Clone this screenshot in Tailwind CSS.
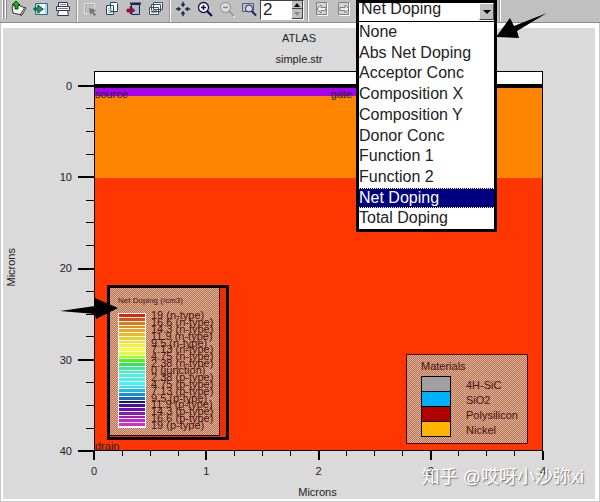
<!DOCTYPE html>
<html lang="en">

<head>
    <meta charset="UTF-8">
    <meta name="viewport" content="width=device-width, initial-scale=1.0">
    <title>ATLAS - simple.str</title>
    <script src="https://cdn.jsdelivr.net/npm/@tailwindcss/browser@4"></script>
</head>

<body class="flex h-screen min-h-[420px] flex-col overflow-hidden bg-white font-['Liberation_Sans',Arial,sans-serif] text-[11px] text-[#222]">
    <!-- Toolbar -->
    <header class="relative z-10 flex h-[23px] shrink-0 items-start border-b border-[#8c8c8c] bg-[#c0c0c0]">
        <div class="flex h-[19px] w-2 gap-px pl-0.5">
            <span class="w-0.5 border-r border-[#888] bg-white"></span>
            <span class="w-0.5 border-r border-[#888] bg-white"></span>
        </div>
        <button aria-label="Open" class="flex h-[19px] w-[22px] justify-center">
            <svg class="h-[18px] w-4" viewBox="0 0 16 18">
                <path d="M1 7l4-3 9 4-3 7-9-2z" fill="#fff" stroke="#333" />
                <path d="M14 7l1 1-4 7-2 0z" fill="#e8d890" stroke="#444" />
                <path d="M5 1l4 4H7v4H4V5H1z" fill="#18b818" stroke="#064806" />
            </svg>
        </button>
        <button aria-label="Save" class="flex h-[19px] w-[22px] justify-center">
            <svg class="h-[18px] w-4" viewBox="0 0 16 18">
                <path d="M2.500 3.500h12v11h-12z" fill="#a8d8ec" stroke="#36688c" />
                <path d="M6 4h6v4H6zM7 10h5v4H7z" fill="#fff" />
                <path d="M1 8h4V5l5 4-5 4v-3H1z" fill="#20a060" stroke="#0a5030" />
            </svg>
        </button>
        <button aria-label="Print" class="flex h-[19px] w-[22px] justify-center">
            <svg class="h-[18px] w-4" viewBox="0 0 16 18" fill="#fff" stroke="#33335c">
                <path d="M3.500 7V2.500h9V7M1.500 6.500h13v4h-13zM3.500 10.500h9l1 5h-11z" />
                <path d="M5 4.500h6M3 8.500h10" stroke="#777799" />
            </svg>
        </button>
        <div class="flex h-[22px] w-[5px] justify-center"><span class="w-0.5 border-r border-white bg-[#999]"></span></div>
        <button aria-label="Select" class="flex h-[19px] w-[22px] justify-center">
            <svg class="h-[18px] w-4" viewBox="0 0 16 18" fill="none">
                <path d="M2.500 3.500h10v10h-10z" stroke="#f4f4f4" stroke-dasharray="2 1" />
                <path d="M3.500 4.500h8v8h-8z" stroke="#8a8a8a" stroke-dasharray="1 2" />
                <path d="M7 8l7 2-2 2 2 3-2 1-2-3-2 2z" fill="#777" />
            </svg>
        </button>
        <button aria-label="Copy" class="flex h-[19px] w-[22px] justify-center">
            <svg class="h-[18px] w-4" viewBox="0 0 16 18" fill="#fff" stroke="#2c4464">
                <path d="M6.500 2.500h6l1 1v8h-7zM2.500 5.500h7v9h-7z" />
                <path d="M4 8.500h4M4 10.500h4M4 12.500h4" stroke="#8abcd4" />
            </svg>
        </button>
        <button aria-label="Insert" class="flex h-[19px] w-[22px] justify-center">
            <svg class="h-[18px] w-4" viewBox="0 0 16 18">
                <path d="M5.500 4.500h8v10h-8z" fill="#a8bccc" stroke="#202050" />
                <path d="M4 3.500h11" stroke="#202050" stroke-width="2" />
                <path d="M1 9h3V6l5 4.500L4 14v-2H1z" fill="#98103c" stroke="#500020" stroke-width=".5" />
            </svg>
        </button>
        <button aria-label="Windows" class="flex h-[19px] w-[22px] justify-center">
            <svg class="h-[18px] w-4" viewBox="0 0 16 18" fill="#fff" stroke="#38506c">
                <path d="M5.500 2.500h9v7h-9zM3.500 4.500h9v7h-9zM1.500 7.500h9v7h-9z" />
                <path d="M3 10.500h6M3 12.500h6" stroke="#9ab" />
            </svg>
        </button>
        <div class="flex h-[22px] w-[5px] justify-center"><span class="w-0.5 border-r border-white bg-[#999]"></span></div>
        <button aria-label="Fit to window" class="flex h-[19px] w-[22px] justify-center">
            <svg class="h-[18px] w-4" viewBox="0 0 16 18" fill="#20204c">
                <path d="M7.500 2h1v2H10L8 7 6 4h1.500zM7.500 16h1v-2H10l-2-3-2 3h1.500zM1 8.500v1h2V11l3-2-3-2v1.500zM15 8.500v1h-2V11l-3-2 3-2v1.500z" stroke="#20204c" stroke-width=".4" />
            </svg>
        </button>
        <button aria-label="Zoom in" class="flex h-[19px] w-[22px] justify-center">
            <svg class="h-[18px] w-4" viewBox="0 0 16 18" fill="none" stroke="#101050">
                <circle cx="6.500" cy="7.500" r="5" fill="#fff" stroke-width="1.300" />
                <path d="M4 7.500h5M6.500 5v5" stroke-width="1.500" />
                <path d="M10 11l5 5" stroke-width="2.200" />
            </svg>
        </button>
        <button aria-label="Zoom out" disabled class="flex h-[19px] w-[22px] justify-center">
            <svg class="h-[18px] w-4" viewBox="0 0 16 18" fill="none" stroke="#888">
                <path d="M11 12l5 5" stroke="#fff" stroke-width="1.500" />
                <circle cx="6.500" cy="7.500" r="5" fill="#ddd" />
                <path d="M4 7.500h5M10 11l5 5" stroke-width="1.500" />
            </svg>
        </button>
        <button aria-label="Zoom area" class="flex h-[19px] w-[22px] justify-center">
            <svg class="h-[18px] w-4" viewBox="0 0 16 18" fill="none" stroke="#24245c">
                <path d="M1.500 3.500h11v8h-11z" stroke="#55558a" />
                <circle cx="8" cy="8.500" r="3.500" fill="#d4dce8" />
                <path d="M11 11.500l4 4" stroke-width="2" />
            </svg>
        </button>
        <div class="flex h-5 w-11 border border-[#444] border-r-white border-b-white bg-white">
            <input type="text" aria-label="Zoom factor" value="2" class="min-w-0 flex-1 pl-0.5 text-[17px] leading-4 text-[#222] outline-none">
            <div class="flex w-[11px] flex-col bg-[#c0c0c0]">
                <button aria-label="Increase" class="flex h-2 items-center justify-center border-r border-b border-[#444]">
                    <svg class="h-1 w-1.5" viewBox="0 0 6 4"><path d="M3 0l3 4H0z" /></svg>
                </button>
                <button aria-label="Decrease" class="flex flex-1 items-center justify-center border-r border-b border-[#444]">
                    <svg class="h-1 w-1.5" viewBox="0 0 6 4"><path d="M0 0h6L3 4z" fill="#888" /></svg>
                </button>
            </div>
        </div>
        <div class="flex h-[22px] w-[7px] justify-center"><span class="w-0.5 border-r border-white bg-[#999]"></span></div>
        <button aria-label="Previous" disabled class="flex h-[19px] w-[22px] justify-center">
            <svg class="h-[18px] w-4" viewBox="0 0 16 18" fill="#d4d4d4" stroke="#808080">
                <path d="M3.500 3.500h10v12h-10z" stroke="#fff" />
                <path d="M2.500 2.500h10v12h-10z" />
                <path d="M3 9l4-4v2.500h5v3H7V13z" fill="#eee" />
            </svg>
        </button>
        <button aria-label="Next" disabled class="flex h-[19px] w-[22px] justify-center">
            <svg class="h-[18px] w-4" viewBox="0 0 16 18" fill="#d4d4d4" stroke="#808080">
                <path d="M3.500 3.500h10v12h-10z" stroke="#fff" />
                <path d="M2.500 2.500h10v12h-10z" />
                <path d="M13 9L9 5v2.500H4v3h5V13z" fill="#eee" />
            </svg>
        </button>

        <!-- Quantity drop-down, opened over the plot -->
        <div class="relative ml-px h-[22px] w-[141px]">
            <div class="absolute inset-x-0 top-0 border-3 border-black bg-white text-base text-[#222]">
                <div class="flex h-[18px] items-start justify-between overflow-hidden">
                    <select aria-label="Quantity" class="-mt-1 h-5 flex-1 appearance-none pl-0.5 leading-5 outline-none">
                        <option>Net Doping</option>
                    </select>
                    <span class="flex h-[17px] w-[15px] items-center justify-center border border-white border-r-[#444] border-b-[#444] bg-[#c0c0c0]">
                        <svg class="h-1 w-2" viewBox="0 0 8 4"><path d="M0 0h8L4 4z" /></svg>
                    </span>
                </div>
                <ul role="listbox" aria-label="Quantities" class="grid h-[208px] grid-rows-10 border-t border-black leading-5">
                    <li role="option">None</li>
                    <li role="option">Abs Net Doping</li>
                    <li role="option">Acceptor Conc</li>
                    <li role="option">Composition X</li>
                    <li role="option">Composition Y</li>
                    <li role="option">Donor Conc</li>
                    <li role="option">Function 1</li>
                    <li role="option">Function 2</li>
                    <li role="option" aria-selected="true" class="border-y border-dotted border-white bg-[#000080] leading-[18px] text-white">Net Doping</li>
                    <li role="option">Total Doping</li>
                </ul>
            </div>
            <svg class="absolute top-3 left-[140px] h-7 w-[52px]" viewBox="0 0 52 28">
                <path d="M0 25L14 6l4 8L51 1 21 19l2 7z" />
            </svg>
        </div>
        <span class="ml-0.5 h-[22px] w-0.5 border-r border-white bg-[#999]"></span>
    </header>

    <main class="flex min-h-0 flex-1 border-x border-b border-[#c8c8c8] pt-[5px] pr-1 pb-0.5 pl-0.5">
        <div class="relative flex flex-1 flex-col bg-[#dadada]">
            <h1 class="text-center leading-[21px]">ATLAS</h1>
            <h2 class="mb-px text-center leading-[21px]">simple.str</h2>

            <div class="flex min-h-0 flex-1 pr-[52px]">
                <!-- Y axis -->
                <div class="flex w-[91px] items-center justify-between">
                    <div class="rotate-180 pb-3 pl-px leading-4 [writing-mode:vertical-rl]">Microns</div>
                    <div id="y-axis" class="flex flex-col items-end justify-between self-stretch pt-[15px]"></div>
                </div>

                <!-- Cross section -->
                <div class="relative flex flex-1 flex-col border border-black bg-white leading-3">
                    <div class="h-3"></div>
                    <div class="h-1 bg-black"></div>
                    <div class="h-[90px] bg-[#ff8400]">
                        <div class="flex h-2 w-[60%] justify-between bg-[#a800f0]">
                            <span>source</span>
                            <span class="pr-[11px]">gate</span>
                        </div>
                    </div>
                    <div class="flex flex-1 items-end bg-[#ff3600] leading-2">drain</div>

                    <!-- Doping legend -->
                    <div class="absolute bottom-[10px] left-3 h-[155px] w-[122px] border-3 border-black bg-[#e83008] pr-1.5 pb-px text-[#4a1010]">
                        <div class="flex h-full flex-col border-r border-b border-[#400] bg-[repeating-conic-gradient(#b4765c_0_25%,#e0b090_0_50%)] bg-size-[2px_2px] pt-2 pl-2">
                            <div class="text-[8px] leading-[10px]">Net Doping (/cm3)</div>
                            <div class="mt-[7px] flex gap-[5px]">
                                <div id="swatches" class="flex w-7 flex-col border border-white bg-white"></div>
                                <div id="levels" class="flex h-[114px] flex-col justify-between py-0.5 whitespace-nowrap"></div>
                            </div>
                        </div>
                        <svg class="absolute top-2 left-[-50px] h-6 w-[58px]" viewBox="0 0 58 24">
                            <path d="M0 15l35-5V2l23 10-22 11-1-5z" />
                        </svg>
                    </div>

                    <!-- Materials legend -->
                    <div class="absolute right-[14px] bottom-1.5 h-[90px] w-[122px] border border-[#400] bg-[repeating-conic-gradient(#b4765c_0_25%,#e0b090_0_50%)] bg-size-[2px_2px] pt-[3px] pl-[14px] text-[#4a1010]">
                        <div class="mb-0.5 leading-4">Materials</div>
                        <ul class="leading-[15px]">
                            <li class="flex h-4 gap-[15px]"><span class="h-4 w-[30px] border border-black bg-[#a0a0a0]"></span><span class="pt-0.5">4H-SiC</span></li>
                            <li class="-mt-px flex h-4 gap-[15px]"><span class="h-4 w-[30px] border border-black bg-[#00b0ff]"></span><span class="pt-0.5">SiO2</span></li>
                            <li class="-mt-px flex h-4 gap-[15px]"><span class="h-4 w-[30px] border border-black bg-[#b00000]"></span><span class="pt-0.5">Polysilicon</span></li>
                            <li class="-mt-px flex h-4 gap-[15px]"><span class="h-4 w-[30px] border border-black bg-[#ffb400]"></span><span class="pt-0.5">Nickel</span></li>
                        </ul>
                    </div>
                </div>
            </div>

            <!-- X axis -->
            <div id="x-axis" class="flex h-[34px] justify-between pr-[52px] pl-[91px]"></div>
            <div class="h-[14px] pl-[37px] text-center leading-[14px]">Microns</div>

            <div class="absolute right-[11px] bottom-3 font-['Liberation_Sans','Noto_Sans_CJK_SC',sans-serif] text-lg leading-5 text-white text-shadow-[1px_1px_1px_#777]">知乎 @哎呀小沙弥xi</div>
        </div>
    </main>

    <script>
        // 17 ticks per axis, every fourth one is labelled
        const yAxis = document.getElementById('y-axis')
        const xAxis = document.getElementById('x-axis')
        for (let i = 0; i <= 16; i++) {
            const major = i % 4 === 0
            yAxis.insertAdjacentHTML('beforeend', major
                ? `<div class="flex h-0 items-center gap-1.5"><span>${i / 4 * 10}</span><span class="h-0.5 w-4 bg-black"></span></div>`
                : '<div class="flex h-0 items-center"><span class="h-px w-2 bg-black"></span></div>')
            xAxis.insertAdjacentHTML('beforeend', major
                ? `<div class="flex w-0 flex-col items-center gap-[3px]"><span class="h-[9px] w-0.5 bg-black"></span><span class="leading-4">${i / 4}</span></div>`
                : '<div class="flex w-0 justify-center"><span class="h-[5px] w-px shrink-0 bg-black"></span></div>')
        }

        const colors = ['#e02010', '#d85010', '#e07818', '#e09020', '#e8a828', '#f0b828', '#f0cc28', '#f4e030', '#f8f038', '#fcfc40',
            '#e0fc38', '#a0fc20', '#50f020', '#30e850', '#38ec98', '#40f0c0', '#48f4d8', '#48f4e8', '#48f0f8', '#38dcf4',
            '#28b8e8', '#1890d8', '#1468c0', '#101090', '#4810a0', '#6810b0', '#8818b8', '#a020c0', '#c028c8', '#d828d0']
        const swatches = document.getElementById('swatches')
        colors.forEach((color, i) => {
            const size = i % 4 === 3 ? 'h-0.5' : 'h-[3px]'
            swatches.insertAdjacentHTML('beforeend', `<span class="${size} mb-px" style="background:${color}"></span>`)
        })

        const levels = ['19 (n-type)', '16.6 (n-type)', '14.3 (n-type)', '11.9 (n-type)', '9.5 (n-type)', '7.13 (n-type)', '4.75 (n-type)', '2.38 (n-type)', '0 (junction)',
            '2.38 (p-type)', '4.75 (p-type)', '7.13 (p-type)', '9.5 (p-type)', '11.9 (p-type)', '14.3 (p-type)', '16.6 (p-type)', '19 (p-type)']
        levels.forEach(level => {
            document.getElementById('levels').insertAdjacentHTML('beforeend', `<div class="flex h-0 items-center">${level}</div>`)
        })
    </script>
</body>

</html>
